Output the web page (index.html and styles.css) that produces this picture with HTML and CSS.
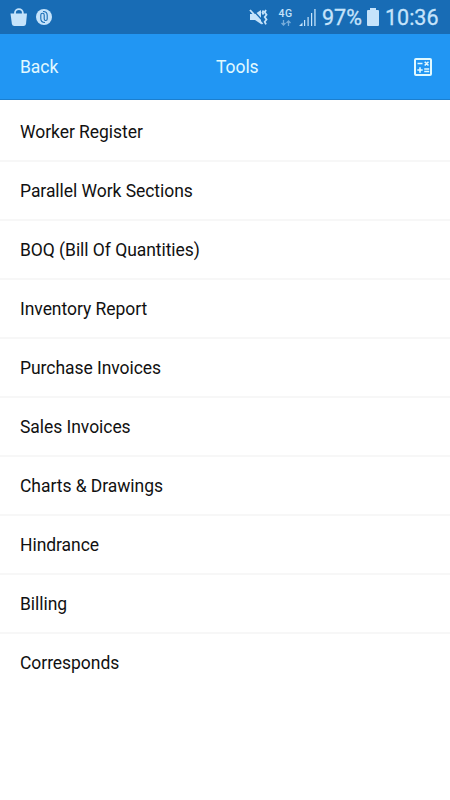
FILE: index.html
```html
<!DOCTYPE html>
<html lang="en">
<head>
<meta charset="utf-8">
<title>Tools</title>
<link rel="stylesheet" href="styles.css">
</head>
<body>
<div class="status">
  <svg class="bag" width="18" height="19" viewBox="0 0 18 19"><path d="M.5 5.500h16.500l-1 10.500a2.500 2.500 0 0 1-2.500 2H4.400a2.500 2.500 0 0 1-2.500-2z" fill="currentColor"/><path d="M5 7V4.500a3.900 3.400 0 0 1 7.800 0V7" fill="none" stroke="currentColor" stroke-width="1.800"/></svg>
  <svg class="swirl" width="16" height="16" viewBox="0 0 16 16"><circle cx="8" cy="8" r="8" fill="currentColor"/><path d="M4.800 9.500V6a1.700 1.700 0 0 1 3.400 0v4a1.500 1.500 0 0 0 3 0V6.300C11.200 4 9.500 2.500 7 2.500M4.800 9.500c0 2.500 1.700 4 4.200 4" fill="none" stroke="#186cb5" stroke-width="1.100"/></svg>
  <span class="space"></span>
  <svg class="mute" width="20" height="17" viewBox="0 0 20 17"><path d="M1 5h5l6-4v14l-6-4H1z" fill="currentColor"/><path d="M3 0l11 12" stroke="#186cb5" stroke-width="1.400"/><path d="M1 1l12.500 14" stroke="currentColor" stroke-width="1.800"/><path d="M14.500 1.500l-1 2 1 2M17 1l-1.300 2.300L17.500 5.700l-1.800 2.400 1.800 2.400-1.800 2.300 1.300 2.500" fill="none" stroke="currentColor" stroke-width="1.800"/></svg>
  <div class="net"><span>4G</span><svg width="10" height="6" viewBox="0 0 10 6"><path d="M2.500 0v5M.5 3l2 2 2-2M7.500 6V1M5.500 3l2-2 2 2" fill="none" stroke="currentColor" stroke-width="1.300"/></svg></div>
  <svg class="signal" width="18" height="17" viewBox="0 0 18 17" fill="currentColor"><path d="M0 17l3.500-3.500V17zM5 11h1.200v6H5zM8.500 8h1.200v9H8.500zM12 4h1.200v13H12zM15.300 0h1.300v17h-1.300z"/></svg>
  <span class="pct">97%</span>
  <svg class="battery" width="12" height="18" viewBox="0 0 12 18" fill="currentColor"><path d="M3 0h6v2h2q1 0 1 1v14q0 1-1 1H1q-1 0-1-1V3q0-1 1-1h2z"/></svg>
  <span class="time">10:36</span>
</div>
<header class="bar">
  <span class="back">Back</span>
  <h1 class="title">Tools</h1>
  <svg class="calc" width="18" height="18" viewBox="0 0 18 18" fill="none" stroke="currentColor"><rect x="1" y="1" width="16" height="16" rx="1" stroke-width="2"/><path d="M3.500 5.500h5M10.700 3.700l3.800 3.800M14.500 3.700l-3.800 3.800M3.300 12h5.400M6 9.300v5.400M10.200 11h5M10.200 13.500h5" stroke-width="1.600"/></svg>
</header>
<ul class="list">
  <li>Worker Register</li>
  <li>Parallel Work Sections</li>
  <li>BOQ (Bill Of Quantities)</li>
  <li>Inventory Report</li>
  <li>Purchase Invoices</li>
  <li>Sales Invoices</li>
  <li>Charts &amp; Drawings</li>
  <li>Hindrance</li>
  <li>Billing</li>
  <li>Corresponds</li>
</ul>
</body>
</html>
```

FILE: styles.css
```css
* { box-sizing: border-box; }
body { margin: 0; background: #fff; font-family: Roboto, sans-serif; color: #111; height: 800px; overflow: hidden; }
.status { height: 34px; background: #186cb5; color: #c5e3fb; display: flex; align-items: center; padding: 0 11px 0 10px; }
.swirl { margin-left: 8px; }
.space { flex: 1; }
.net { width: 15px; margin-left: 9px; display: flex; flex-direction: column; align-items: center; font-size: 10.500px; font-weight: 500; line-height: 10px; letter-spacing: .5px; padding-top: 1px; }
.net svg { margin-top: 1px; opacity: .55; }
.signal { margin-left: 6px; }
.pct { margin-left: 5px; font-size: 21.500px; line-height: 24px; padding-top: 1px; width: 40px; white-space: nowrap; -webkit-text-stroke: .3px currentColor; }
.battery { margin-left: 5px; }
.time { margin-left: 6px; font-size: 21.500px; line-height: 24px; padding-top: 1px; width: 54px; white-space: nowrap; -webkit-text-stroke: .3px currentColor; }
.bar { height: 66px; background: #2196f3; border-bottom: 1px solid #1b7fcf; color: #e1f9ff; display: grid; grid-template-columns: 196px 1fr auto; align-items: center; padding: 1px 18px 0 20px; font-size: 17.500px; letter-spacing: -.05px; }
.title { margin: 0; font-size: inherit; font-weight: 400; }
.list { list-style: none; margin: 0; padding: 3px 0 0; }
.list li { height: 59px; line-height: 58px; padding-left: 20px; font-size: 17.500px; letter-spacing: -.05px; border-bottom: 2px solid #f7f7f7; }
.list li:last-child { border-bottom: 0; }
```
